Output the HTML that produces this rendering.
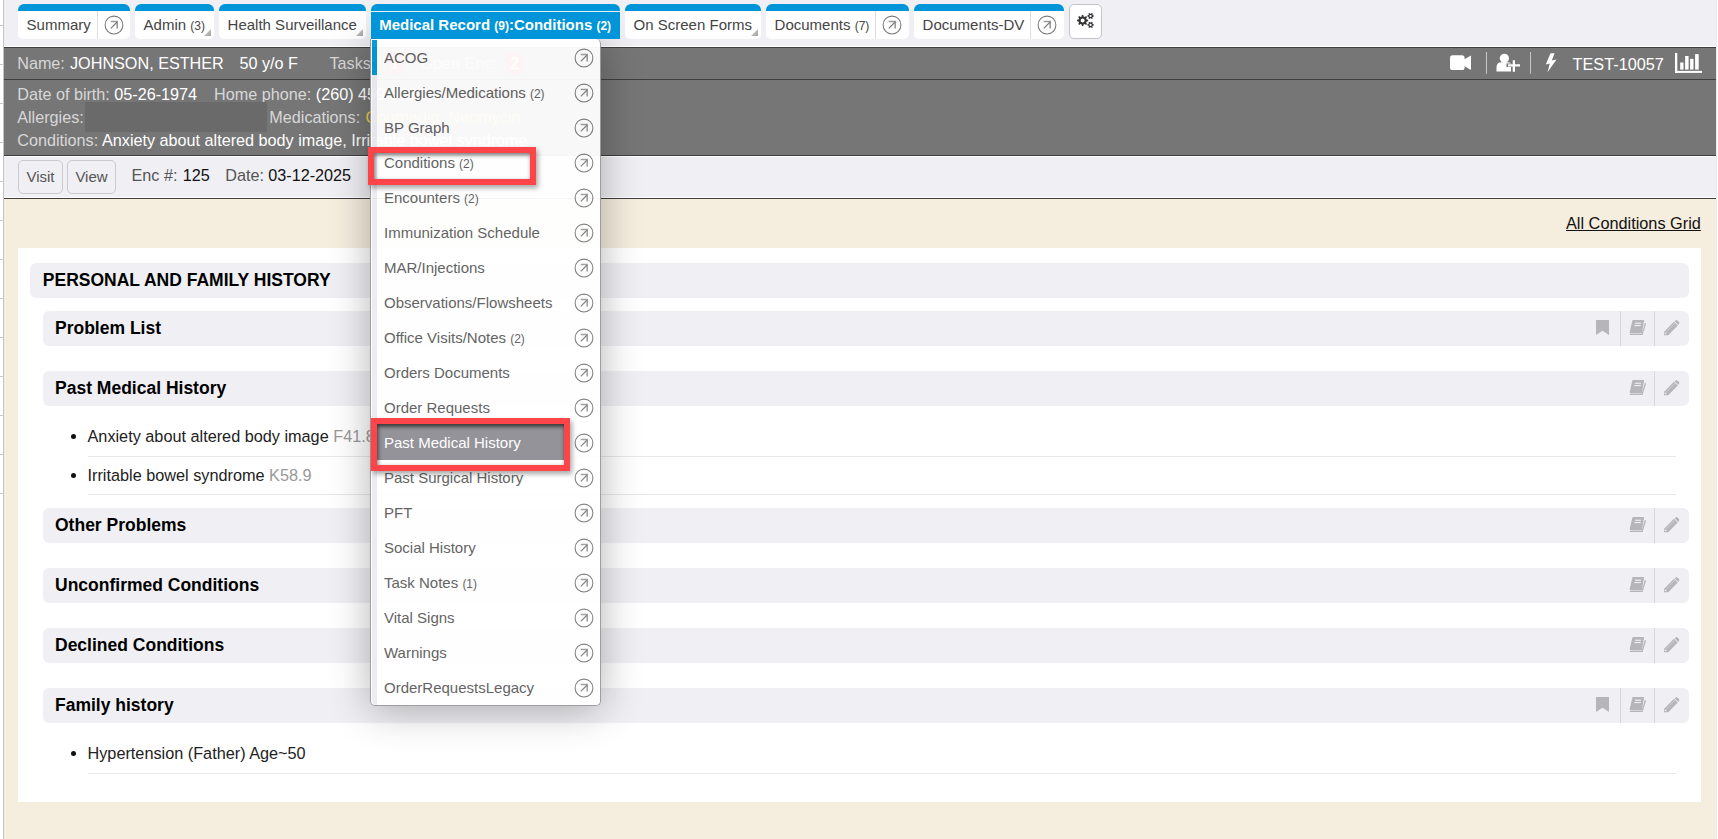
<!DOCTYPE html>
<html><head><meta charset="utf-8">
<style>
*{box-sizing:border-box;margin:0;padding:0}
html,body{width:1718px;height:839px;overflow:hidden;background:#fff;font-family:"Liberation Sans",sans-serif}
.a{position:absolute}
.t{position:absolute;white-space:nowrap}
#strip{left:0;top:0;width:3px;height:839px;background:#fff}
#vline{left:3px;top:0;width:1px;height:839px;background:#c4c4c4}
#tabbar{left:4px;top:0;width:1712px;height:46px;background:#f0f0f4}
.tab{position:absolute;top:4px;height:35px;background:#fff;border-radius:6px 6px 5px 5px;overflow:hidden}
.tab .bar{position:absolute;left:0;top:0;right:0;height:7px;background:#0095d8}
.sm{font-size:12px}
.tri{position:absolute;width:7px;height:7px}
#hdr{left:4px;top:46px;width:1712px;height:110px;background:#767676}
.hl{position:absolute;width:1712px;height:1px;background:#3e3e3e}
.wl{position:absolute;width:1712px;height:1px;background:#fff}
.lab{color:#dcdcdc}
.val{color:#fff}
#bar2{left:4px;top:157px;width:1712px;height:40px;background:#f0f0f4}
.btn{position:absolute;top:160px;height:34px;border:1px solid #c9c9ce;border-radius:5px;background:#efeff4;font-size:15px;color:#555;line-height:32px;text-align:center}
#beige{left:4px;top:199px;width:1712px;height:640px;background:#f5edde}
#panel{left:18px;top:248px;width:1683px;height:554px;background:#fff}
.box{position:absolute;height:35px;background:#f0f0f4;border-radius:6px}
.code{color:#999}
.dot{position:absolute;width:5.2px;height:5.2px;border-radius:50%;background:#111}
.isep{position:absolute;height:1px;background:#e8e8ec}
#ddold{position:absolute;left:371px;top:39px;width:230px;height:667px;background:#fff;border:1px solid #a8a8a8;border-top:none;border-radius:0 6px 5px 5px;opacity:0.95;box-shadow:-3px 4px 10px rgba(0,0,0,0.25)}

#ddwrap{position:absolute;z-index:7;left:0;top:0;width:1718px;height:839px;opacity:0.95}

</style></head>
<body>
<div class="a" id="strip"></div><div class="a" id="vline"></div><div class="a" style="left:1716px;top:0;width:1px;height:839px;background:#ececec"></div>
<div class="a" style="left:0;top:25px;width:3px;height:1px;background:#c8c8c8"></div><div class="a" style="left:0;top:64px;width:3px;height:1px;background:#c8c8c8"></div><div class="a" style="left:0;top:103px;width:3px;height:1px;background:#c8c8c8"></div><div class="a" style="left:0;top:142px;width:3px;height:1px;background:#c8c8c8"></div><div class="a" style="left:0;top:181px;width:3px;height:1px;background:#c8c8c8"></div><div class="a" style="left:0;top:220px;width:3px;height:1px;background:#c8c8c8"></div><div class="a" style="left:0;top:259px;width:3px;height:1px;background:#c8c8c8"></div><div class="a" style="left:0;top:298px;width:3px;height:1px;background:#c8c8c8"></div><div class="a" style="left:0;top:337px;width:3px;height:1px;background:#c8c8c8"></div><div class="a" style="left:0;top:376px;width:3px;height:1px;background:#c8c8c8"></div><div class="a" style="left:0;top:415px;width:3px;height:1px;background:#c8c8c8"></div><div class="a" style="left:0;top:454px;width:3px;height:1px;background:#c8c8c8"></div><div class="a" style="left:0;top:493px;width:3px;height:1px;background:#c8c8c8"></div>
<div class="a" id="tabbar"></div>
<div class="tab" style="left:18px;width:112px"><div class="bar"></div></div>
<div class="t" style="left:26.6px;top:14.80px;font-size:15px;line-height:20px;color:#444">Summary</div>
<div class="a" style="left:97px;top:11px;width:1px;height:28px;background:#dcdcdc"></div>
<svg class="a" style="left:103.7px;top:14.600000000000001px" width="20" height="20" viewBox="0 0 20 20"><circle cx="10" cy="10" r="8.9" fill="none" stroke="#7a7a7a" stroke-width="1.05"/><path d="M6.8 13.3 L13.1 7" stroke="#7a7a7a" stroke-width="1.15" fill="none"/><path d="M6.7 6.5 H13.2 V13.4" stroke="#7a7a7a" stroke-opacity="0.75" stroke-width="1.6" fill="none"/></svg>
<div class="tab" style="left:135px;width:79px"><div class="bar"></div></div>
<div class="t" style="left:143.6px;top:14.80px;font-size:15px;line-height:20px;color:#444">Admin <span class="sm">(3)</span></div>
<svg class="tri" style="left:204px;top:29px" width="7" height="7" viewBox="0 0 7 7"><defs><linearGradient id="g135" x1="0" y1="0" x2="1" y2="1"><stop offset="0" stop-color="#d8d8d8"/><stop offset="1" stop-color="#a0a0a0"/></linearGradient></defs><path d="M7 0V7H0Z" fill="url(#g135)"/></svg>
<div class="tab" style="left:219px;width:147px"><div class="bar"></div></div>
<div class="t" style="left:227.6px;top:14.80px;font-size:15px;line-height:20px;color:#444">Health Surveillance</div>
<svg class="tri" style="left:356px;top:29px" width="7" height="7" viewBox="0 0 7 7"><defs><linearGradient id="g219" x1="0" y1="0" x2="1" y2="1"><stop offset="0" stop-color="#d8d8d8"/><stop offset="1" stop-color="#a0a0a0"/></linearGradient></defs><path d="M7 0V7H0Z" fill="url(#g219)"/></svg>
<div class="a" style="z-index:5;left:370px;top:39px;width:231px;height:667px;border-radius:0 5px 5px 5px;box-shadow:0 4px 40px rgba(0,0,0,0.30)"></div>
<div class="a" style="z-index:6;left:371px;top:4px;width:249px;height:35px;background:#0095d8;border-radius:6px 6px 0 0"></div>
<div class="a" style="z-index:6;left:371px;top:11px;width:249px;height:1px;background:#e2f2fa"></div>
<div class="t" style="left:379.2px;top:14.80px;font-size:15px;line-height:20px;color:#fff;font-weight:bold;z-index:6">Medical Record <span style="font-size:12px">(9)</span>:Conditions <span style="font-size:12px">(2)</span></div>
<div class="tab" style="left:625px;width:136px"><div class="bar"></div></div>
<div class="t" style="left:633.6px;top:14.80px;font-size:15px;line-height:20px;color:#444">On Screen Forms</div>
<svg class="tri" style="left:751px;top:29px" width="7" height="7" viewBox="0 0 7 7"><defs><linearGradient id="g625" x1="0" y1="0" x2="1" y2="1"><stop offset="0" stop-color="#d8d8d8"/><stop offset="1" stop-color="#a0a0a0"/></linearGradient></defs><path d="M7 0V7H0Z" fill="url(#g625)"/></svg>
<div class="tab" style="left:766px;width:143px"><div class="bar"></div></div>
<div class="t" style="left:774.6px;top:14.80px;font-size:15px;line-height:20px;color:#444">Documents <span class="sm">(7)</span></div>
<div class="a" style="left:875px;top:11px;width:1px;height:28px;background:#dcdcdc"></div>
<svg class="a" style="left:881.7px;top:14.600000000000001px" width="20" height="20" viewBox="0 0 20 20"><circle cx="10" cy="10" r="8.9" fill="none" stroke="#7a7a7a" stroke-width="1.05"/><path d="M6.8 13.3 L13.1 7" stroke="#7a7a7a" stroke-width="1.15" fill="none"/><path d="M6.7 6.5 H13.2 V13.4" stroke="#7a7a7a" stroke-opacity="0.75" stroke-width="1.6" fill="none"/></svg>
<div class="tab" style="left:914px;width:150px"><div class="bar"></div></div>
<div class="t" style="left:922.6px;top:14.80px;font-size:15px;line-height:20px;color:#444">Documents-DV</div>
<div class="a" style="left:1030px;top:11px;width:1px;height:28px;background:#dcdcdc"></div>
<svg class="a" style="left:1036.7px;top:14.600000000000001px" width="20" height="20" viewBox="0 0 20 20"><circle cx="10" cy="10" r="8.9" fill="none" stroke="#7a7a7a" stroke-width="1.05"/><path d="M6.8 13.3 L13.1 7" stroke="#7a7a7a" stroke-width="1.15" fill="none"/><path d="M6.7 6.5 H13.2 V13.4" stroke="#7a7a7a" stroke-opacity="0.75" stroke-width="1.6" fill="none"/></svg>
<div class="a" style="left:1069px;top:4px;width:33px;height:35px;background:#fff;border:1px solid #c4c4c8;border-radius:5px"></div>
<svg class="a" style="left:1070px;top:4px" width="32" height="35" viewBox="1070 4 32 35"><path d="M1086.70 19.60 L1088.15 19.73 L1088.15 21.27 L1086.70 21.40 L1086.14 22.76 L1087.06 23.88 L1085.98 24.96 L1084.86 24.04 L1083.50 24.60 L1083.37 26.05 L1081.83 26.05 L1081.70 24.60 L1080.34 24.04 L1079.22 24.96 L1078.14 23.88 L1079.06 22.76 L1078.50 21.40 L1077.05 21.27 L1077.05 19.73 L1078.50 19.60 L1079.06 18.24 L1078.14 17.12 L1079.22 16.04 L1080.34 16.96 L1081.70 16.40 L1081.83 14.95 L1083.37 14.95 L1083.50 16.40 L1084.86 16.96 L1085.98 16.04 L1087.06 17.12 L1086.14 18.24Z M1084.60 20.50 A2.0 2.0 0 1 0 1080.60 20.50 A2.0 2.0 0 1 0 1084.60 20.50Z" fill="#333" fill-rule="evenodd"/><path d="M1092.90 15.32 L1093.84 15.40 L1093.84 16.60 L1092.90 16.68 L1092.34 17.65 L1092.74 18.51 L1091.70 19.11 L1091.16 18.33 L1090.04 18.33 L1089.50 19.11 L1088.46 18.51 L1088.86 17.65 L1088.30 16.68 L1087.36 16.60 L1087.36 15.40 L1088.30 15.32 L1088.86 14.35 L1088.46 13.49 L1089.50 12.89 L1090.04 13.67 L1091.16 13.67 L1091.70 12.89 L1092.74 13.49 L1092.34 14.35Z M1091.70 16.00 A1.1 1.1 0 1 0 1089.50 16.00 A1.1 1.1 0 1 0 1091.70 16.00Z" fill="#333" fill-rule="evenodd"/><path d="M1092.90 24.22 L1093.84 24.30 L1093.84 25.50 L1092.90 25.58 L1092.34 26.55 L1092.74 27.41 L1091.70 28.01 L1091.16 27.23 L1090.04 27.23 L1089.50 28.01 L1088.46 27.41 L1088.86 26.55 L1088.30 25.58 L1087.36 25.50 L1087.36 24.30 L1088.30 24.22 L1088.86 23.25 L1088.46 22.39 L1089.50 21.79 L1090.04 22.57 L1091.16 22.57 L1091.70 21.79 L1092.74 22.39 L1092.34 23.25Z M1091.70 24.90 A1.1 1.1 0 1 0 1089.50 24.90 A1.1 1.1 0 1 0 1091.70 24.90Z" fill="#333" fill-rule="evenodd"/></svg>
<div class="a" id="hdr"></div>
<div class="wl" style="top:46px;left:4px"></div><div class="hl" style="top:47px;left:4px"></div>
<div class="hl" style="top:79px;left:4px"></div><div class="hl" style="top:155px;left:4px"></div><div class="wl" style="top:156px;left:4px"></div>
<div class="t" style="left:17.2px;top:53.39px;font-size:16.2px;line-height:20px;color:#d8d8d8">Name:</div>
<div class="t" style="left:70px;top:53.39px;font-size:16.2px;line-height:20px;color:#fff">JOHNSON, ESTHER</div>
<div class="t" style="left:239.5px;top:53.39px;font-size:16.2px;line-height:20px;color:#fff">50 y/o F</div>
<div class="t" style="left:329.5px;top:53.39px;font-size:16.2px;line-height:20px;color:#d8d8d8">Tasks:</div>
<div class="a" style="left:387px;top:53px;width:16px;height:21px;background:#e8453c;border-radius:3px"></div>
<div class="t" style="left:390px;top:53.39px;font-size:16.2px;line-height:20px;color:#fff">1</div>
<div class="t" style="left:420.5px;top:53.39px;font-size:16.2px;line-height:20px;color:#d8d8d8">Open Enc:</div>
<div class="a" style="left:506px;top:53px;width:17px;height:21px;background:#e8453c;border-radius:3px"></div>
<div class="t" style="left:510px;top:53.39px;font-size:16.2px;line-height:20px;color:#fff">2</div>
<div class="t" style="left:17.2px;top:84.39px;font-size:16.2px;line-height:20px;color:#d8d8d8">Date of birth:</div>
<div class="t" style="left:114.3px;top:84.39px;font-size:16.2px;line-height:20px;color:#fff">05-26-1974</div>
<div class="t" style="left:214px;top:84.39px;font-size:16.2px;line-height:20px;color:#d8d8d8">Home phone:</div>
<div class="t" style="left:315.8px;top:84.39px;font-size:16.2px;line-height:20px;color:#fff">(260) 459-3321</div>
<div class="t" style="left:17.2px;top:107.39px;font-size:16.2px;line-height:20px;color:#d8d8d8">Allergies:</div>
<div class="a" style="left:85px;top:102px;width:182px;height:30px;background:#6a6a6a"></div>
<div class="t" style="left:269.3px;top:107.39px;font-size:16.2px;line-height:20px;color:#d8d8d8">Medications:</div>
<div class="t" style="left:365.5px;top:107.39px;font-size:16.2px;line-height:20px;color:#f2d24a">Coumadin, Neomycin</div>
<svg class="a" style="left:1440px;top:48px" width="280" height="31" viewBox="1440 48 280 31"><rect x="1450" y="55.3" width="14.6" height="14.7" rx="2.6" fill="#fff"/><path d="M1464 59.5 L1471 55.6 V70 L1464 66 Z" fill="#fff"/><rect x="1486" y="52" width="1" height="21.7" fill="#c8c8c8"/><rect x="1530" y="52" width="1" height="21.7" fill="#c8c8c8"/><circle cx="1504.4" cy="58.3" r="4.6" fill="#fff"/><path d="M1496.5 71.6 V67.5 Q1496.5 62.3 1501.5 62.3 H1507.5 Q1510 62.3 1511 63.5 V71.6 Z" fill="#fff"/><path d="M1506.5 63.6 H1521.3 V67 H1506.5Z M1512.2 59.8 H1515.5 V72.2 H1512.2Z" fill="#767676"/><path d="M1508 64.2 H1520 V66.5 H1508Z M1512.7 60.2 H1515 V71.8 H1512.7Z" fill="#fff"/><path d="M1550.5 53.3 H1554.6 L1551.8 60.5 L1556.5 59.5 L1547.5 72.3 L1549.8 63.6 L1545.8 64.5 Z" fill="#fff"/><rect x="1675" y="53" width="2.3" height="20" fill="#fff"/><rect x="1675" y="70.9" width="27" height="2" fill="#fff"/><rect x="1680.2" y="62.5" width="3.3" height="7.1" fill="#fff"/><rect x="1685.1" y="56" width="3.5" height="13.6" fill="#fff"/><rect x="1690.1" y="58.9" width="3.4" height="10.7" fill="#fff"/><rect x="1695.1" y="54.1" width="3.6" height="15.5" fill="#fff"/></svg>
<div class="t" style="left:1572.5px;top:54.35px;font-size:16.3px;line-height:20px;color:#fff">TEST-10057</div>
<div class="t" style="left:17.2px;top:130.39px;font-size:16.2px;line-height:20px;color:#d8d8d8">Conditions:</div>
<div class="t" style="left:102px;top:130.39px;font-size:16.2px;line-height:20px;color:#fff">Anxiety about altered body image, Irritable bowel syndrome</div>
<div class="a" id="bar2"></div><div class="wl" style="top:197px;left:4px"></div><div class="hl" style="top:198px;left:4px"></div>
<div class="btn" style="left:18px;width:45px">Visit</div><div class="btn" style="left:67px;width:49px">View</div>
<div class="t" style="left:131.5px;top:165.39px;font-size:16.2px;line-height:20px;color:#555">Enc #:</div>
<div class="t" style="left:182.8px;top:165.39px;font-size:16.2px;line-height:20px;color:#111">125</div>
<div class="t" style="left:225.3px;top:165.39px;font-size:16.2px;line-height:20px;color:#555">Date:</div>
<div class="t" style="left:268.3px;top:165.39px;font-size:16.2px;line-height:20px;color:#111">03-12-2025</div>
<div class="a" id="beige"></div>
<div class="t" style="left:1566px;top:213.35px;font-size:16.3px;line-height:20px;color:#111"><span style="text-decoration:underline">All Conditions Grid</span></div>
<div class="a" id="panel"></div>
<div class="box" style="left:30px;top:263px;width:1659px"></div>
<div class="t" style="left:42.8px;top:269.94px;font-size:17.5px;line-height:20px;font-weight:bold;color:#000">PERSONAL AND FAMILY HISTORY</div>
<div class="box" style="left:43px;top:311px;width:1646px"></div>
<div class="t" style="left:55px;top:317.94px;font-size:17.5px;line-height:20px;font-weight:bold;color:#000">Problem List</div>
<div class="a" style="left:1654px;top:311px;width:1px;height:35px;background:#d8d8dc"></div>
<div class="a" style="left:1620px;top:311px;width:1px;height:35px;background:#d8d8dc"></div>
<svg class="a" style="left:1595px;top:319px" width="15" height="17" viewBox="0 0 15 17"><path d="M1 1.4Q1 1 1.4 1H13.6Q14 1 14 1.4V16L7.5 11.8L1 16Z" fill="#b6b5ba"/></svg>
<svg class="a" style="left:1628px;top:319px" width="19" height="18" viewBox="0 0 19 18"><path d="M5.2 1H15.6Q16.2 1 16.1 1.6L14 13.6Q13.9 14.2 13.3 14.2H2.6Q1.5 14.2 1.7 13.1L4.3 1.7Q4.5 1 5.2 1Z" fill="#b6b5ba"/><path d="M1.8 15.4H14.1L17.5 4.2" fill="none" stroke="#b6b5ba" stroke-width="1.3"/><rect x="7" y="3.7" width="6" height="1.1" fill="#f0f0f4"/><rect x="6.3" y="6" width="6.5" height="1.1" fill="#f0f0f4"/></svg>
<svg class="a" style="left:1662px;top:319px" width="19" height="18" viewBox="0 0 19 18"><path d="M1.9 16.2L2.4 12.4L12 2.8L15.8 6.6L6.2 16.2Z" fill="#b6b5ba"/><path d="M12.6 2.2L13.6 1.4Q14.5 0.7 15.4 1.5L17 3.1Q17.8 4 17 4.9L16.2 5.8Z" fill="#b6b5ba"/><path d="M4.3 12.8L13.1 4" stroke="#f0f0f4" stroke-width="0.6" stroke-opacity="0.7"/><path d="M3 15L4.2 13.8" stroke="#f0f0f4" stroke-width="1.1"/></svg>
<div class="box" style="left:43px;top:371px;width:1646px"></div>
<div class="t" style="left:55px;top:377.94px;font-size:17.5px;line-height:20px;font-weight:bold;color:#000">Past Medical History</div>
<div class="a" style="left:1654px;top:371px;width:1px;height:35px;background:#d8d8dc"></div>
<svg class="a" style="left:1628px;top:379px" width="19" height="18" viewBox="0 0 19 18"><path d="M5.2 1H15.6Q16.2 1 16.1 1.6L14 13.6Q13.9 14.2 13.3 14.2H2.6Q1.5 14.2 1.7 13.1L4.3 1.7Q4.5 1 5.2 1Z" fill="#b6b5ba"/><path d="M1.8 15.4H14.1L17.5 4.2" fill="none" stroke="#b6b5ba" stroke-width="1.3"/><rect x="7" y="3.7" width="6" height="1.1" fill="#f0f0f4"/><rect x="6.3" y="6" width="6.5" height="1.1" fill="#f0f0f4"/></svg>
<svg class="a" style="left:1662px;top:379px" width="19" height="18" viewBox="0 0 19 18"><path d="M1.9 16.2L2.4 12.4L12 2.8L15.8 6.6L6.2 16.2Z" fill="#b6b5ba"/><path d="M12.6 2.2L13.6 1.4Q14.5 0.7 15.4 1.5L17 3.1Q17.8 4 17 4.9L16.2 5.8Z" fill="#b6b5ba"/><path d="M4.3 12.8L13.1 4" stroke="#f0f0f4" stroke-width="0.6" stroke-opacity="0.7"/><path d="M3 15L4.2 13.8" stroke="#f0f0f4" stroke-width="1.1"/></svg>
<div class="dot" style="left:71px;top:434px"></div>
<div class="t" style="left:87.5px;top:426.37px;font-size:16.25px;line-height:20px;color:#222">Anxiety about altered body image <span class="code">F41.8</span></div>
<div class="isep" style="left:88px;top:456px;width:1588px"></div>
<div class="dot" style="left:71px;top:473px"></div>
<div class="t" style="left:87.5px;top:465.37px;font-size:16.25px;line-height:20px;color:#222">Irritable bowel syndrome <span class="code">K58.9</span></div>
<div class="isep" style="left:88px;top:494px;width:1588px"></div>
<div class="box" style="left:43px;top:508px;width:1646px"></div>
<div class="t" style="left:55px;top:514.94px;font-size:17.5px;line-height:20px;font-weight:bold;color:#000">Other Problems</div>
<div class="a" style="left:1654px;top:508px;width:1px;height:35px;background:#d8d8dc"></div>
<svg class="a" style="left:1628px;top:516px" width="19" height="18" viewBox="0 0 19 18"><path d="M5.2 1H15.6Q16.2 1 16.1 1.6L14 13.6Q13.9 14.2 13.3 14.2H2.6Q1.5 14.2 1.7 13.1L4.3 1.7Q4.5 1 5.2 1Z" fill="#b6b5ba"/><path d="M1.8 15.4H14.1L17.5 4.2" fill="none" stroke="#b6b5ba" stroke-width="1.3"/><rect x="7" y="3.7" width="6" height="1.1" fill="#f0f0f4"/><rect x="6.3" y="6" width="6.5" height="1.1" fill="#f0f0f4"/></svg>
<svg class="a" style="left:1662px;top:516px" width="19" height="18" viewBox="0 0 19 18"><path d="M1.9 16.2L2.4 12.4L12 2.8L15.8 6.6L6.2 16.2Z" fill="#b6b5ba"/><path d="M12.6 2.2L13.6 1.4Q14.5 0.7 15.4 1.5L17 3.1Q17.8 4 17 4.9L16.2 5.8Z" fill="#b6b5ba"/><path d="M4.3 12.8L13.1 4" stroke="#f0f0f4" stroke-width="0.6" stroke-opacity="0.7"/><path d="M3 15L4.2 13.8" stroke="#f0f0f4" stroke-width="1.1"/></svg>
<div class="box" style="left:43px;top:568px;width:1646px"></div>
<div class="t" style="left:55px;top:574.94px;font-size:17.5px;line-height:20px;font-weight:bold;color:#000">Unconfirmed Conditions</div>
<div class="a" style="left:1654px;top:568px;width:1px;height:35px;background:#d8d8dc"></div>
<svg class="a" style="left:1628px;top:576px" width="19" height="18" viewBox="0 0 19 18"><path d="M5.2 1H15.6Q16.2 1 16.1 1.6L14 13.6Q13.9 14.2 13.3 14.2H2.6Q1.5 14.2 1.7 13.1L4.3 1.7Q4.5 1 5.2 1Z" fill="#b6b5ba"/><path d="M1.8 15.4H14.1L17.5 4.2" fill="none" stroke="#b6b5ba" stroke-width="1.3"/><rect x="7" y="3.7" width="6" height="1.1" fill="#f0f0f4"/><rect x="6.3" y="6" width="6.5" height="1.1" fill="#f0f0f4"/></svg>
<svg class="a" style="left:1662px;top:576px" width="19" height="18" viewBox="0 0 19 18"><path d="M1.9 16.2L2.4 12.4L12 2.8L15.8 6.6L6.2 16.2Z" fill="#b6b5ba"/><path d="M12.6 2.2L13.6 1.4Q14.5 0.7 15.4 1.5L17 3.1Q17.8 4 17 4.9L16.2 5.8Z" fill="#b6b5ba"/><path d="M4.3 12.8L13.1 4" stroke="#f0f0f4" stroke-width="0.6" stroke-opacity="0.7"/><path d="M3 15L4.2 13.8" stroke="#f0f0f4" stroke-width="1.1"/></svg>
<div class="box" style="left:43px;top:628px;width:1646px"></div>
<div class="t" style="left:55px;top:634.94px;font-size:17.5px;line-height:20px;font-weight:bold;color:#000">Declined Conditions</div>
<div class="a" style="left:1654px;top:628px;width:1px;height:35px;background:#d8d8dc"></div>
<svg class="a" style="left:1628px;top:636px" width="19" height="18" viewBox="0 0 19 18"><path d="M5.2 1H15.6Q16.2 1 16.1 1.6L14 13.6Q13.9 14.2 13.3 14.2H2.6Q1.5 14.2 1.7 13.1L4.3 1.7Q4.5 1 5.2 1Z" fill="#b6b5ba"/><path d="M1.8 15.4H14.1L17.5 4.2" fill="none" stroke="#b6b5ba" stroke-width="1.3"/><rect x="7" y="3.7" width="6" height="1.1" fill="#f0f0f4"/><rect x="6.3" y="6" width="6.5" height="1.1" fill="#f0f0f4"/></svg>
<svg class="a" style="left:1662px;top:636px" width="19" height="18" viewBox="0 0 19 18"><path d="M1.9 16.2L2.4 12.4L12 2.8L15.8 6.6L6.2 16.2Z" fill="#b6b5ba"/><path d="M12.6 2.2L13.6 1.4Q14.5 0.7 15.4 1.5L17 3.1Q17.8 4 17 4.9L16.2 5.8Z" fill="#b6b5ba"/><path d="M4.3 12.8L13.1 4" stroke="#f0f0f4" stroke-width="0.6" stroke-opacity="0.7"/><path d="M3 15L4.2 13.8" stroke="#f0f0f4" stroke-width="1.1"/></svg>
<div class="box" style="left:43px;top:688px;width:1646px"></div>
<div class="t" style="left:55px;top:694.94px;font-size:17.5px;line-height:20px;font-weight:bold;color:#000">Family history</div>
<div class="a" style="left:1654px;top:688px;width:1px;height:35px;background:#d8d8dc"></div>
<div class="a" style="left:1620px;top:688px;width:1px;height:35px;background:#d8d8dc"></div>
<svg class="a" style="left:1595px;top:696px" width="15" height="17" viewBox="0 0 15 17"><path d="M1 1.4Q1 1 1.4 1H13.6Q14 1 14 1.4V16L7.5 11.8L1 16Z" fill="#b6b5ba"/></svg>
<svg class="a" style="left:1628px;top:696px" width="19" height="18" viewBox="0 0 19 18"><path d="M5.2 1H15.6Q16.2 1 16.1 1.6L14 13.6Q13.9 14.2 13.3 14.2H2.6Q1.5 14.2 1.7 13.1L4.3 1.7Q4.5 1 5.2 1Z" fill="#b6b5ba"/><path d="M1.8 15.4H14.1L17.5 4.2" fill="none" stroke="#b6b5ba" stroke-width="1.3"/><rect x="7" y="3.7" width="6" height="1.1" fill="#f0f0f4"/><rect x="6.3" y="6" width="6.5" height="1.1" fill="#f0f0f4"/></svg>
<svg class="a" style="left:1662px;top:696px" width="19" height="18" viewBox="0 0 19 18"><path d="M1.9 16.2L2.4 12.4L12 2.8L15.8 6.6L6.2 16.2Z" fill="#b6b5ba"/><path d="M12.6 2.2L13.6 1.4Q14.5 0.7 15.4 1.5L17 3.1Q17.8 4 17 4.9L16.2 5.8Z" fill="#b6b5ba"/><path d="M4.3 12.8L13.1 4" stroke="#f0f0f4" stroke-width="0.6" stroke-opacity="0.7"/><path d="M3 15L4.2 13.8" stroke="#f0f0f4" stroke-width="1.1"/></svg>
<div class="dot" style="left:71px;top:751px"></div>
<div class="t" style="left:87.5px;top:743.37px;font-size:16.25px;line-height:20px;color:#222">Hypertension (Father) Age~50</div>
<div class="isep" style="left:88px;top:773px;width:1588px"></div>
<div id="ddwrap">
<div class="a" style="left:370px;top:39px;width:231px;height:667px;background:#fff;border:1px solid #9a9a9e;border-top:none;border-radius:0 5px 5px 5px"></div>
<div class="a" style="left:372px;top:40px;width:5px;height:665px;background:#ececf2;border-radius:0 0 0 4px"></div>
<div class="a" style="left:372px;top:40px;width:5px;height:35px;background:#0095d8"></div>
<div class="t" style="left:384px;top:47.80px;font-size:15px;line-height:20px;color:#5c5c5c">ACOG</div>
<svg class="a" style="left:573.8px;top:47.8px" width="20" height="20" viewBox="0 0 20 20"><circle cx="10" cy="10" r="8.9" fill="none" stroke="#7c7c7c" stroke-width="1.05"/><path d="M6.8 13.3 L13.1 7" stroke="#7c7c7c" stroke-width="1.15" fill="none"/><path d="M6.7 6.5 H13.2 V13.4" stroke="#7c7c7c" stroke-opacity="0.75" stroke-width="1.6" fill="none"/></svg>
<div class="t" style="left:384px;top:82.80px;font-size:15px;line-height:20px;color:#5c5c5c">Allergies/Medications <span class="sm">(2)</span></div>
<svg class="a" style="left:573.8px;top:82.8px" width="20" height="20" viewBox="0 0 20 20"><circle cx="10" cy="10" r="8.9" fill="none" stroke="#7c7c7c" stroke-width="1.05"/><path d="M6.8 13.3 L13.1 7" stroke="#7c7c7c" stroke-width="1.15" fill="none"/><path d="M6.7 6.5 H13.2 V13.4" stroke="#7c7c7c" stroke-opacity="0.75" stroke-width="1.6" fill="none"/></svg>
<div class="t" style="left:384px;top:117.80px;font-size:15px;line-height:20px;color:#5c5c5c">BP Graph</div>
<svg class="a" style="left:573.8px;top:117.8px" width="20" height="20" viewBox="0 0 20 20"><circle cx="10" cy="10" r="8.9" fill="none" stroke="#7c7c7c" stroke-width="1.05"/><path d="M6.8 13.3 L13.1 7" stroke="#7c7c7c" stroke-width="1.15" fill="none"/><path d="M6.7 6.5 H13.2 V13.4" stroke="#7c7c7c" stroke-opacity="0.75" stroke-width="1.6" fill="none"/></svg>
<div class="t" style="left:384px;top:152.80px;font-size:15px;line-height:20px;color:#5c5c5c">Conditions <span class="sm">(2)</span></div>
<svg class="a" style="left:573.8px;top:152.8px" width="20" height="20" viewBox="0 0 20 20"><circle cx="10" cy="10" r="8.9" fill="none" stroke="#7c7c7c" stroke-width="1.05"/><path d="M6.8 13.3 L13.1 7" stroke="#7c7c7c" stroke-width="1.15" fill="none"/><path d="M6.7 6.5 H13.2 V13.4" stroke="#7c7c7c" stroke-opacity="0.75" stroke-width="1.6" fill="none"/></svg>
<div class="t" style="left:384px;top:187.80px;font-size:15px;line-height:20px;color:#5c5c5c">Encounters <span class="sm">(2)</span></div>
<svg class="a" style="left:573.8px;top:187.8px" width="20" height="20" viewBox="0 0 20 20"><circle cx="10" cy="10" r="8.9" fill="none" stroke="#7c7c7c" stroke-width="1.05"/><path d="M6.8 13.3 L13.1 7" stroke="#7c7c7c" stroke-width="1.15" fill="none"/><path d="M6.7 6.5 H13.2 V13.4" stroke="#7c7c7c" stroke-opacity="0.75" stroke-width="1.6" fill="none"/></svg>
<div class="t" style="left:384px;top:222.80px;font-size:15px;line-height:20px;color:#5c5c5c">Immunization Schedule</div>
<svg class="a" style="left:573.8px;top:222.8px" width="20" height="20" viewBox="0 0 20 20"><circle cx="10" cy="10" r="8.9" fill="none" stroke="#7c7c7c" stroke-width="1.05"/><path d="M6.8 13.3 L13.1 7" stroke="#7c7c7c" stroke-width="1.15" fill="none"/><path d="M6.7 6.5 H13.2 V13.4" stroke="#7c7c7c" stroke-opacity="0.75" stroke-width="1.6" fill="none"/></svg>
<div class="t" style="left:384px;top:257.80px;font-size:15px;line-height:20px;color:#5c5c5c">MAR/Injections</div>
<svg class="a" style="left:573.8px;top:257.8px" width="20" height="20" viewBox="0 0 20 20"><circle cx="10" cy="10" r="8.9" fill="none" stroke="#7c7c7c" stroke-width="1.05"/><path d="M6.8 13.3 L13.1 7" stroke="#7c7c7c" stroke-width="1.15" fill="none"/><path d="M6.7 6.5 H13.2 V13.4" stroke="#7c7c7c" stroke-opacity="0.75" stroke-width="1.6" fill="none"/></svg>
<div class="t" style="left:384px;top:292.80px;font-size:15px;line-height:20px;color:#5c5c5c">Observations/Flowsheets</div>
<svg class="a" style="left:573.8px;top:292.8px" width="20" height="20" viewBox="0 0 20 20"><circle cx="10" cy="10" r="8.9" fill="none" stroke="#7c7c7c" stroke-width="1.05"/><path d="M6.8 13.3 L13.1 7" stroke="#7c7c7c" stroke-width="1.15" fill="none"/><path d="M6.7 6.5 H13.2 V13.4" stroke="#7c7c7c" stroke-opacity="0.75" stroke-width="1.6" fill="none"/></svg>
<div class="t" style="left:384px;top:327.80px;font-size:15px;line-height:20px;color:#5c5c5c">Office Visits/Notes <span class="sm">(2)</span></div>
<svg class="a" style="left:573.8px;top:327.8px" width="20" height="20" viewBox="0 0 20 20"><circle cx="10" cy="10" r="8.9" fill="none" stroke="#7c7c7c" stroke-width="1.05"/><path d="M6.8 13.3 L13.1 7" stroke="#7c7c7c" stroke-width="1.15" fill="none"/><path d="M6.7 6.5 H13.2 V13.4" stroke="#7c7c7c" stroke-opacity="0.75" stroke-width="1.6" fill="none"/></svg>
<div class="t" style="left:384px;top:362.80px;font-size:15px;line-height:20px;color:#5c5c5c">Orders Documents</div>
<svg class="a" style="left:573.8px;top:362.8px" width="20" height="20" viewBox="0 0 20 20"><circle cx="10" cy="10" r="8.9" fill="none" stroke="#7c7c7c" stroke-width="1.05"/><path d="M6.8 13.3 L13.1 7" stroke="#7c7c7c" stroke-width="1.15" fill="none"/><path d="M6.7 6.5 H13.2 V13.4" stroke="#7c7c7c" stroke-opacity="0.75" stroke-width="1.6" fill="none"/></svg>
<div class="t" style="left:384px;top:397.80px;font-size:15px;line-height:20px;color:#5c5c5c">Order Requests</div>
<svg class="a" style="left:573.8px;top:397.8px" width="20" height="20" viewBox="0 0 20 20"><circle cx="10" cy="10" r="8.9" fill="none" stroke="#7c7c7c" stroke-width="1.05"/><path d="M6.8 13.3 L13.1 7" stroke="#7c7c7c" stroke-width="1.15" fill="none"/><path d="M6.7 6.5 H13.2 V13.4" stroke="#7c7c7c" stroke-opacity="0.75" stroke-width="1.6" fill="none"/></svg>
<div class="a" style="left:377px;top:424px;width:187px;height:36px;background:#8f8e94;box-shadow:inset 0 3px 4px -1px rgba(0,0,0,0.35)"></div>
<div class="t" style="left:384px;top:432.80px;font-size:15px;line-height:20px;color:#fff">Past Medical History</div>
<svg class="a" style="left:573.8px;top:432.8px" width="20" height="20" viewBox="0 0 20 20"><circle cx="10" cy="10" r="8.9" fill="none" stroke="#7c7c7c" stroke-width="1.05"/><path d="M6.8 13.3 L13.1 7" stroke="#7c7c7c" stroke-width="1.15" fill="none"/><path d="M6.7 6.5 H13.2 V13.4" stroke="#7c7c7c" stroke-opacity="0.75" stroke-width="1.6" fill="none"/></svg>
<div class="t" style="left:384px;top:467.80px;font-size:15px;line-height:20px;color:#5c5c5c">Past Surgical History</div>
<svg class="a" style="left:573.8px;top:467.8px" width="20" height="20" viewBox="0 0 20 20"><circle cx="10" cy="10" r="8.9" fill="none" stroke="#7c7c7c" stroke-width="1.05"/><path d="M6.8 13.3 L13.1 7" stroke="#7c7c7c" stroke-width="1.15" fill="none"/><path d="M6.7 6.5 H13.2 V13.4" stroke="#7c7c7c" stroke-opacity="0.75" stroke-width="1.6" fill="none"/></svg>
<div class="t" style="left:384px;top:502.80px;font-size:15px;line-height:20px;color:#5c5c5c">PFT</div>
<svg class="a" style="left:573.8px;top:502.79999999999995px" width="20" height="20" viewBox="0 0 20 20"><circle cx="10" cy="10" r="8.9" fill="none" stroke="#7c7c7c" stroke-width="1.05"/><path d="M6.8 13.3 L13.1 7" stroke="#7c7c7c" stroke-width="1.15" fill="none"/><path d="M6.7 6.5 H13.2 V13.4" stroke="#7c7c7c" stroke-opacity="0.75" stroke-width="1.6" fill="none"/></svg>
<div class="t" style="left:384px;top:537.80px;font-size:15px;line-height:20px;color:#5c5c5c">Social History</div>
<svg class="a" style="left:573.8px;top:537.8px" width="20" height="20" viewBox="0 0 20 20"><circle cx="10" cy="10" r="8.9" fill="none" stroke="#7c7c7c" stroke-width="1.05"/><path d="M6.8 13.3 L13.1 7" stroke="#7c7c7c" stroke-width="1.15" fill="none"/><path d="M6.7 6.5 H13.2 V13.4" stroke="#7c7c7c" stroke-opacity="0.75" stroke-width="1.6" fill="none"/></svg>
<div class="t" style="left:384px;top:572.80px;font-size:15px;line-height:20px;color:#5c5c5c">Task Notes <span class="sm">(1)</span></div>
<svg class="a" style="left:573.8px;top:572.8px" width="20" height="20" viewBox="0 0 20 20"><circle cx="10" cy="10" r="8.9" fill="none" stroke="#7c7c7c" stroke-width="1.05"/><path d="M6.8 13.3 L13.1 7" stroke="#7c7c7c" stroke-width="1.15" fill="none"/><path d="M6.7 6.5 H13.2 V13.4" stroke="#7c7c7c" stroke-opacity="0.75" stroke-width="1.6" fill="none"/></svg>
<div class="t" style="left:384px;top:607.80px;font-size:15px;line-height:20px;color:#5c5c5c">Vital Signs</div>
<svg class="a" style="left:573.8px;top:607.8px" width="20" height="20" viewBox="0 0 20 20"><circle cx="10" cy="10" r="8.9" fill="none" stroke="#7c7c7c" stroke-width="1.05"/><path d="M6.8 13.3 L13.1 7" stroke="#7c7c7c" stroke-width="1.15" fill="none"/><path d="M6.7 6.5 H13.2 V13.4" stroke="#7c7c7c" stroke-opacity="0.75" stroke-width="1.6" fill="none"/></svg>
<div class="t" style="left:384px;top:642.80px;font-size:15px;line-height:20px;color:#5c5c5c">Warnings</div>
<svg class="a" style="left:573.8px;top:642.8px" width="20" height="20" viewBox="0 0 20 20"><circle cx="10" cy="10" r="8.9" fill="none" stroke="#7c7c7c" stroke-width="1.05"/><path d="M6.8 13.3 L13.1 7" stroke="#7c7c7c" stroke-width="1.15" fill="none"/><path d="M6.7 6.5 H13.2 V13.4" stroke="#7c7c7c" stroke-opacity="0.75" stroke-width="1.6" fill="none"/></svg>
<div class="t" style="left:384px;top:677.80px;font-size:15px;line-height:20px;color:#5c5c5c">OrderRequestsLegacy</div>
<svg class="a" style="left:573.8px;top:677.8px" width="20" height="20" viewBox="0 0 20 20"><circle cx="10" cy="10" r="8.9" fill="none" stroke="#7c7c7c" stroke-width="1.05"/><path d="M6.8 13.3 L13.1 7" stroke="#7c7c7c" stroke-width="1.15" fill="none"/><path d="M6.7 6.5 H13.2 V13.4" stroke="#7c7c7c" stroke-opacity="0.75" stroke-width="1.6" fill="none"/></svg>
</div>
<div class="a" style="left:368px;top:147px;width:168px;height:38px;z-index:8;border:6px solid #fd4448;box-shadow:2px 3px 5px rgba(0,0,0,0.35), inset 1px 2px 4px rgba(0,0,0,0.55)"></div>
<div class="a" style="left:371px;top:418px;width:199px;height:53px;z-index:8;border:6px solid #fd4448;box-shadow:2px 3px 5px rgba(0,0,0,0.35), inset 1px 2px 4px rgba(0,0,0,0.55)"></div>
</body></html>
